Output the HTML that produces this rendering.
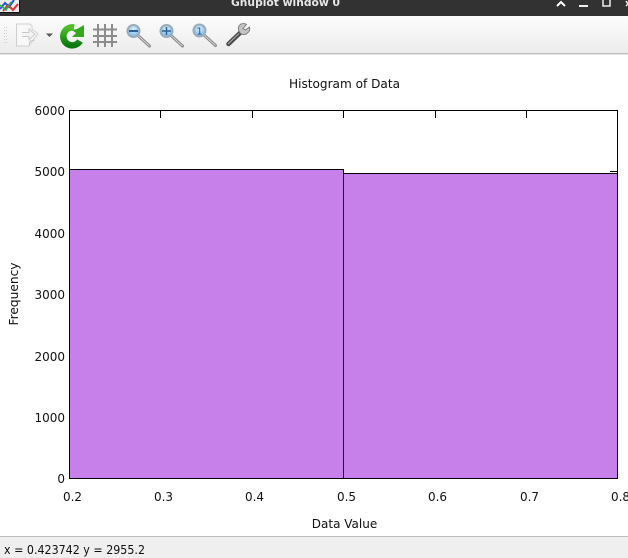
<!DOCTYPE html>
<html><head><meta charset="utf-8">
<style>
html,body{margin:0;padding:0;width:628px;height:558px;overflow:hidden;background:#fff}
svg{display:block}
text{font-family:"DejaVu Sans",sans-serif;font-size:12px;fill:#111}
</style></head><body>
<svg width="628" height="558" viewBox="0 0 628 558" xmlns="http://www.w3.org/2000/svg">
<defs>
<linearGradient id="tb" x1="0" y1="0" x2="0" y2="1"><stop offset="0" stop-color="#fcfcfc"/><stop offset="1" stop-color="#ececec"/></linearGradient>
<linearGradient id="gr" x1="0" y1="0" x2="0" y2="1"><stop offset="0" stop-color="#4fc02c"/><stop offset="1" stop-color="#0a7a10"/></linearGradient>
<radialGradient id="lens" cx=".5" cy=".35" r=".65"><stop offset="0" stop-color="#d9eefc"/><stop offset="1" stop-color="#74b6ea"/></radialGradient>
<filter id="b" x="-20%" y="-20%" width="140%" height="140%"><feGaussianBlur stdDeviation="0.35"/></filter>
<g id="mag">
<line x1="11" y1="11" x2="22.500" y2="21.500" stroke="#8a8a8a" stroke-width="3" stroke-linecap="round"/>
<line x1="11" y1="11" x2="22.500" y2="21.500" stroke="#d0d0d0" stroke-width="1"/>
<circle cx="6.500" cy="6.500" r="6" fill="url(#lens)" stroke="#9aabb9" stroke-width="2"/>
</g>
</defs>
<rect x="0" y="0" width="628" height="16" fill="#323232"/>
<rect x="0" y="16" width="628" height="37" fill="url(#tb)"/>
<rect x="0" y="53" width="628" height="1" fill="#bdbdbd"/>
<rect x="0" y="54" width="628" height="1" fill="#e4e4e4"/>
<!-- app icon -->
<rect x="0" y="0" width="19" height="12" fill="#ececec"/>
<path d="M0 9L5 3L9 7L14 0" fill="none" stroke="#2a50d8" stroke-width="2"/>
<path d="M3 11L8 5L13 10L18 4" fill="none" stroke="#e03030" stroke-width="2"/>
<path d="M0 5L6 10L11 2" fill="none" stroke="#20b050" stroke-width="1.500"/>
<rect x="19" y="0" width="1" height="13" fill="#111"/><rect x="0" y="12" width="20" height="1" fill="#111"/>
<text x="285.500" y="6" text-anchor="middle" textLength="109" lengthAdjust="spacingAndGlyphs" style="font-size:11px;font-weight:bold;fill:#e6e6e6">Gnuplot window 0</text>
<!-- window buttons -->
<path d="M557 6L561 2L565 6" fill="none" stroke="#fff" stroke-width="2"/>
<rect x="579" y="5" width="9" height="2" fill="#eee"/>
<path d="M603 0V6H610V0" fill="none" stroke="#eee" stroke-width="1.500"/>
<path d="M626 1L628 4M626 6L628 4" stroke="#eee" stroke-width="1.500"/>
<!-- grip -->
<g fill="#cfcfcf"><rect x="4" y="27" width="1" height="1"/><rect x="6" y="27" width="1" height="1"/><rect x="4" y="30" width="1" height="1"/><rect x="6" y="30" width="1" height="1"/><rect x="4" y="33" width="1" height="1"/><rect x="6" y="33" width="1" height="1"/><rect x="4" y="36" width="1" height="1"/><rect x="6" y="36" width="1" height="1"/><rect x="4" y="39" width="1" height="1"/><rect x="6" y="39" width="1" height="1"/><rect x="4" y="42" width="1" height="1"/><rect x="6" y="42" width="1" height="1"/></g>
<g filter="url(#b)">
<!-- document/export icon -->
<path d="M16.500 24H30L32 26V29L38 34L33 40L29 46H16.500Z" fill="#f8f8f8" stroke="#cfcfcf" stroke-width="1"/>
<path d="M29 46L30 41L35 40" fill="#dcdcdc" stroke="#c4c4c4" stroke-width=".8"/>
<path d="M22 32.500H29V29L35 34.500L29 39.500V36.500H22" fill="#f4f4f4" stroke="#c9c9c9" stroke-width="1"/>
<path d="M46 33.500H53L49.500 37Z" fill="#555"/>
<!-- refresh -->
<path d="M80 41A9 9 0 1 1 74 27.500" fill="none" stroke="url(#gr)" stroke-width="6.500"/>
<path d="M84 25V37H72L76 33L72 30L77 29Z" fill="#36a81f"/>
<!-- grid -->
<g stroke="#8c8c8c" stroke-width="2" fill="none"><path d="M98 24V47M105 24V47M112 24V47M93 29.500H117M93 36H117M93 42H117"/></g>
<!-- magnifiers -->
<use href="#mag" x="127" y="24.500"/>
<rect x="129" y="30" width="9" height="2" fill="#2f5f98"/>
<use href="#mag" x="160" y="24.500"/>
<path d="M162 31H171M166.500 27V35" stroke="#2f5f98" stroke-width="1.500"/>
<use href="#mag" x="193" y="24"/>
<text x="199.500" y="34.500" text-anchor="middle" style="font-size:10px;fill:#24558f">1</text>
<!-- wrench -->
<path d="M228.500 44L241 32" stroke="#4a4a4a" stroke-width="4.500" stroke-linecap="round"/>
<path d="M228 44L239 33.500" stroke="#a8a8a8" stroke-width="1.200"/>
<path d="M243 23.500A5 5 0 0 0 239 31A5 5 0 0 0 247.500 33A5 5 0 0 0 249.500 27L245.500 30L243 28.500L246.500 24.500A5 5 0 0 0 243 23.500Z" fill="#c4c4c4" stroke="#6e6e6e" stroke-width=".8"/>
</g>
<!-- plot -->
<text x="344.500" y="88" text-anchor="middle" textLength="111" lengthAdjust="spacingAndGlyphs">Histogram of Data</text>
<rect x="69.500" y="169.500" width="274" height="309" fill="#c77fea" stroke="#000" stroke-width="1"/>
<rect x="343.500" y="173.500" width="274" height="305" fill="#c77fea" stroke="#000" stroke-width="1"/>
<path d="M69.500 478.500V110.500H617.500V478.500" fill="none" stroke="#000" stroke-width="1"/>
<path d="M160.500 111V118M252.500 111V118M343.500 111V118M435.500 111V118M526.500 111V118M610 171.500H617" stroke="#000" stroke-width="1" fill="none"/>
<g text-anchor="end">
<text x="65" y="115">6000</text>
<text x="65" y="176">5000</text>
<text x="65" y="238">4000</text>
<text x="65" y="299">3000</text>
<text x="65" y="361">2000</text>
<text x="65" y="422">1000</text>
<text x="65" y="483">0</text>
</g>
<g text-anchor="middle">
<text x="72.500" y="501">0.2</text>
<text x="163.500" y="501">0.3</text>
<text x="254.500" y="501">0.4</text>
<text x="346.500" y="501">0.5</text>
<text x="437.500" y="501">0.6</text>
<text x="529.500" y="501">0.7</text>
<text x="620.500" y="501">0.8</text>
<text x="344.500" y="528">Data Value</text>
</g>
<text transform="translate(18 294) rotate(-90)" text-anchor="middle" textLength="63" lengthAdjust="spacingAndGlyphs">Frequency</text>
<!-- status -->
<rect x="0" y="536" width="628" height="22" fill="#efefef"/>
<rect x="0" y="536" width="628" height="1" fill="#bdbdbd"/>
<text x="4" y="554" textLength="141" lengthAdjust="spacingAndGlyphs" style="font-size:12.500px">x = 0.423742 y = 2955.2</text>
</svg>
</body></html>
